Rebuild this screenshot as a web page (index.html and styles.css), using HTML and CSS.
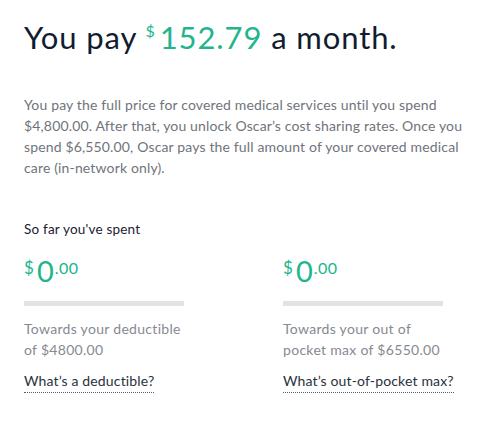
FILE: index.html
```html
<!DOCTYPE html>
<html>
<head>
<meta charset="utf-8">
<link rel="stylesheet" href="styles.css">
</head>
<body>
<main class="page">
  <h1 class="title">You pay <span class="price"><span class="cur">$</span>152.79</span> a month.</h1>
  <p class="intro">You pay the full price for covered medical services until you spend $4,800.00. After that, you unlock Oscar’s cost sharing rates. Once you spend $6,550.00, Oscar pays the full amount of your covered medical care (in-network only).</p>
  <h2 class="label">So far you've spent</h2>
  <div class="cols">
    <section class="col">
      <div class="amount"><span class="sym">$</span><span class="big">0</span><span class="cents">.00</span></div>
      <div class="bar"></div>
      <p class="desc">Towards your deductible<br>of $4800.00</p>
      <a class="link">What’s a deductible?</a>
    </section>
    <section class="col">
      <div class="amount"><span class="sym">$</span><span class="big">0</span><span class="cents">.00</span></div>
      <div class="bar"></div>
      <p class="desc">Towards your out of<br>pocket max of $6550.00</p>
      <a class="link">What’s out-of-pocket max?</a>
    </section>
  </div>
</main>
</body>
</html>
```
FILE: styles.css
```css
html, body { margin: 0; padding: 0; background: #fff; }
body { font-family: Lato, "Noto Sans", sans-serif; }
.page { padding: 11px 24px 0 24px; }
.title {
  margin: 0;
  font-weight: 400;
  font-size: 31px;
  line-height: 40px;
  color: #121c30;
  letter-spacing: 0.9px;
}
.price { color: #22b48d; }
.cur { font-size: 16px; vertical-align: 12px; margin-right: 4px; }
.intro {
  margin: 37px 0 0 0;
  font-size: 14px;
  line-height: 21px;
  color: #6f747c;
  letter-spacing: 0.15px;
  width: 443px;
}
.label {
  margin: 42px 0 0 0;
  font-size: 13.5px;
  font-weight: 400;
  color: #1a2130;
  line-height: 18px;
  letter-spacing: 0.2px;
}
.cols { display: grid; grid-template-columns: 259px 1fr; margin-top: 12px; }
.col { display: flex; flex-direction: column; align-items: flex-start; }
.amount { color: #22b48d; line-height: 36px; height: 36px; white-space: nowrap; }
.sym { font-size: 17px; vertical-align: 8px; margin-right: 3px; }
.big { font-size: 29px; }
.cents { font-size: 16px; vertical-align: 8px; margin-left: 1px; letter-spacing: 0.5px; }
.bar { width: 160px; height: 5px; background: #e2e3e7; margin-top: 15px; }
.desc {
  margin: 12px 0 0 0;
  font-size: 14px;
  line-height: 21px;
  color: #858a92;
  letter-spacing: 0.3px;
}
.link {
  margin-top: 12px;
  font-size: 14px;
  line-height: 18px;
  color: #2a3140;
  border-bottom: 1px dotted #555b66;
  padding-bottom: 2px;
  white-space: nowrap;
  letter-spacing: 0.15px;
}
```
